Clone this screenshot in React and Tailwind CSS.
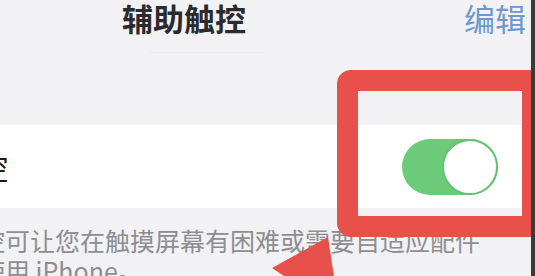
const cjk = { fontFamily: '"Noto Sans CJK SC", "Noto Sans", sans-serif' };

const Toggle = () => (
    <div className="w-[96px] h-[56px] rounded-full bg-[#6ccb78] flex justify-end">
        <div className="w-[56px] h-[56px] rounded-full bg-white border-2 border-[#66c173]"></div>
    </div>
);

export default function App() {
    return (
        <div className="w-[535px] h-[276px] flex overflow-hidden" style={cjk}>
            <div className="relative w-[531px] h-full bg-[#f2f2f4] overflow-hidden">
                {/* Header */}
                <div className="h-[125px] flex flex-col">
                    <div className="flex items-start h-[40px] leading-[36px]">
                        <span className="ml-[122px] text-[31px] font-bold text-[#2b2b2d]">辅助触控</span>
                        <span className="ml-auto mr-[5px] text-[31px] text-[#6d97cf]">编辑</span>
                    </div>
                    <div className="mt-[12px] ml-[150px] w-[115px] h-px bg-[#ebebed]"></div>
                </div>

                {/* Switch row */}
                <div className="h-[83px] bg-white flex items-center pr-[33px]">
                    <span className="-ml-[23px] text-[31px] text-[#1c1c1e] leading-none">控</span>
                    <div className="ml-auto">
                        <Toggle />
                    </div>
                </div>

                {/* Footer description */}
                <div className="pt-[17px] -ml-[20px] w-[530px] text-[25px] leading-[30px] text-[#8d8d92] whitespace-nowrap">
                    <div>控可让您在触摸屏幕有困难或需要自适应配件</div>
                    <div>使用 iPhone。</div>
                </div>

                {/* Red highlight box */}
                <div className="absolute left-[337px] top-[70px] w-[206px] h-[167px] border-[21px] border-[#e8504b] rounded-[14px]"></div>

                {/* Red arrow */}
                <svg className="absolute left-0 top-0" width="531" height="276" viewBox="0 0 531 276">
                    <polygon points="272,268 328,237 334,276 284,276" fill="#e8504b" />
                </svg>
            </div>
            <div className="w-[4px] h-full bg-[#3a3a3c]"></div>
        </div>
    );
}
